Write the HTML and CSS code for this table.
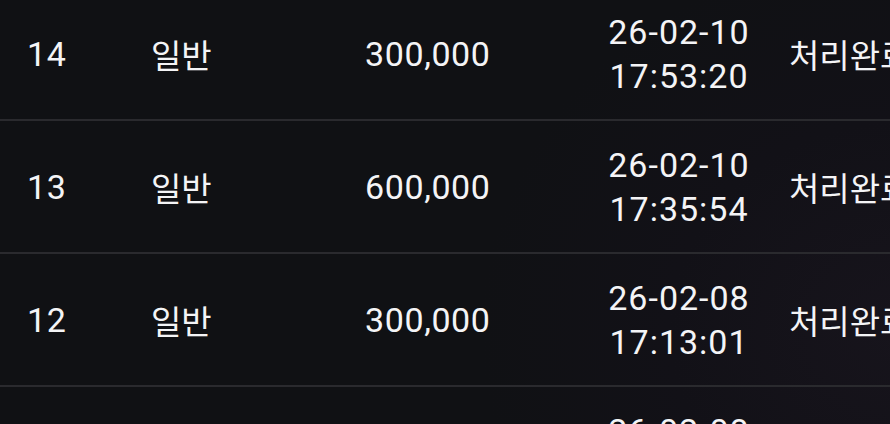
FILE: index.html
```html
<!DOCTYPE html>
<html lang="ko">
<head>
<meta charset="utf-8">
<link rel="stylesheet" href="styles.css">
</head>
<body>
<div class="list">
  <div class="row">
    <div class="cell no">14</div>
    <div class="cell type">일반</div>
    <div class="cell amount">300,000</div>
    <div class="cell date"><span>26-02-10</span><span>17:53:20</span></div>
    <div class="cell status">처리완료</div>
  </div>
  <div class="row">
    <div class="cell no">13</div>
    <div class="cell type">일반</div>
    <div class="cell amount">600,000</div>
    <div class="cell date"><span>26-02-10</span><span>17:35:54</span></div>
    <div class="cell status">처리완료</div>
  </div>
  <div class="row">
    <div class="cell no">12</div>
    <div class="cell type">일반</div>
    <div class="cell amount">300,000</div>
    <div class="cell date"><span>26-02-08</span><span>17:13:01</span></div>
    <div class="cell status">처리완료</div>
  </div>
  <div class="row">
    <div class="cell no">11</div>
    <div class="cell type">일반</div>
    <div class="cell amount">300,000</div>
    <div class="cell date"><span>26-02-08</span><span>16:40:12</span></div>
    <div class="cell status">처리완료</div>
  </div>
</div>
</body>
</html>
```
FILE: styles.css
```css
html, body {
  margin: 0;
  padding: 0;
  height: 100%;
  overflow: hidden;
}
body {
  background: radial-gradient(ellipse 420px 380px at 900px 330px, #17141c 0%, #121117 55%, #101114 100%), #101114;
  color: #f4f4f6;
  font-family: Roboto, "Noto Sans CJK KR", sans-serif;
  font-size: 34px;
}
.list {
  margin-top: -12px;
  width: 890px;
  overflow: hidden;
}
.row {
  display: grid;
  grid-template-columns: 124px 214px 226px 176px 1fr;
  align-items: center;
  height: 131px;
  padding-left: 27px;
  border-bottom: 2px solid #2a2a2e;
  white-space: nowrap;
}
.cell {
  line-height: 44px;
  letter-spacing: 0.6px;
}
.type, .status {
  font-family: "Noto Sans CJK KR", sans-serif;
  font-size: 33px;
  letter-spacing: 0;
}
.date {
  display: flex;
  flex-direction: column;
  align-items: center;
  letter-spacing: 1px;
}
.status {
  padding-left: 22px;
}
```
